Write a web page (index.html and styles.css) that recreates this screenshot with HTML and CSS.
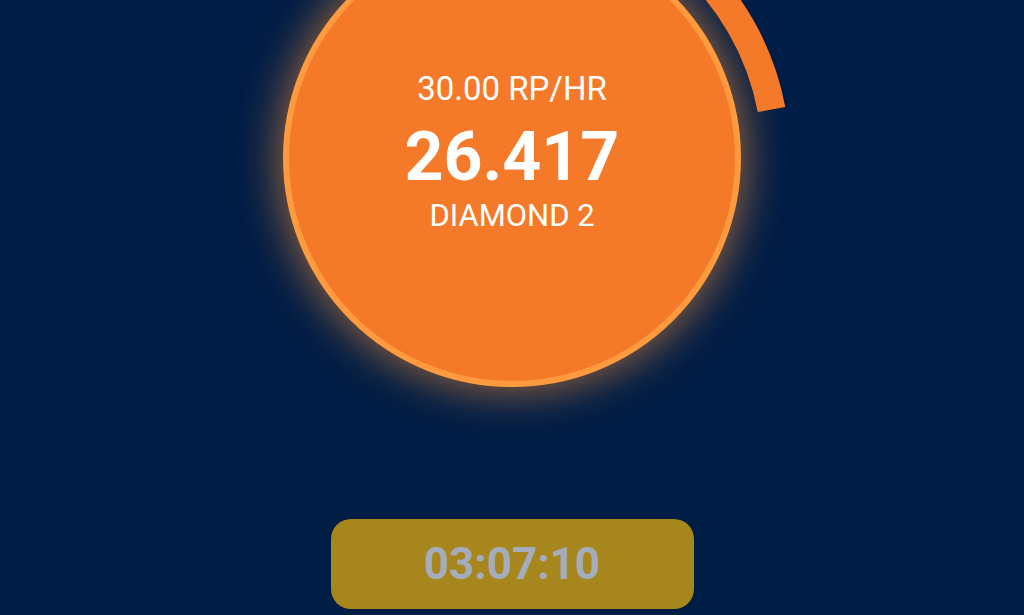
FILE: index.html
```html
<!DOCTYPE html>
<html lang="en">
<head>
    <meta charset="UTF-8">
    <meta name="viewport" content="width=device-width, initial-scale=1.0">
    <title>Mining</title>
    <link rel="stylesheet" href="styles.css">
</head>
<body>
    <div class="screen">
        <div class="meter">
            <div class="orb">
                <div class="rate">30.00 RP/HR</div>
                <div class="balance">26.417</div>
                <div class="rank">DIAMOND 2</div>
            </div>
            <svg class="progress" width="560" height="560" viewBox="0 0 560 560">
                <path d="M 280 16 A 264 264 0 0 1 539.5 231.5" fill="none" stroke="#f47a2a" stroke-width="28"/>
            </svg>
        </div>

        <button type="button" class="timer">03:07:10</button>
    </div>
</body>
</html>
```

FILE: styles.css
```css
body {
    margin: 0;
    background-color: #001d45;
    font-family: 'Roboto', 'Liberation Sans', sans-serif;
    overflow: hidden;
}

.screen {
    height: 615px;
    display: flex;
    flex-direction: column;
    align-items: center;
}

.meter {
    position: relative;
    width: 458px;
    height: 458px;
    margin-top: -71px;
}

.orb {
    box-sizing: border-box;
    width: 458px;
    height: 458px;
    border-radius: 50%;
    background-color: #f47a2a;
    border: 6px solid #ff9a3e;
    box-shadow: 0 0 40px 6px rgba(255, 150, 55, 0.55);
    padding-top: 134px;
    display: flex;
    flex-direction: column;
    align-items: center;
    color: #fff;
}

.rate {
    font-size: 33px;
    line-height: 40px;
}

.balance {
    font-size: 68px;
    font-weight: bold;
    line-height: 76px;
    margin-top: 10px;
}

.rank {
    font-size: 31px;
    line-height: 36px;
    margin-top: 3px;
}

.progress {
    position: absolute;
    top: -51px;
    left: -51px;
}

.timer {
    margin-top: 132px;
    width: 363px;
    height: 90px;
    border: none;
    border-radius: 20px;
    background-color: #a8861e;
    color: #a4adbd;
    font-family: 'Roboto', 'Liberation Sans', sans-serif;
    font-size: 44px;
    font-weight: bold;
    cursor: pointer;
}
```
